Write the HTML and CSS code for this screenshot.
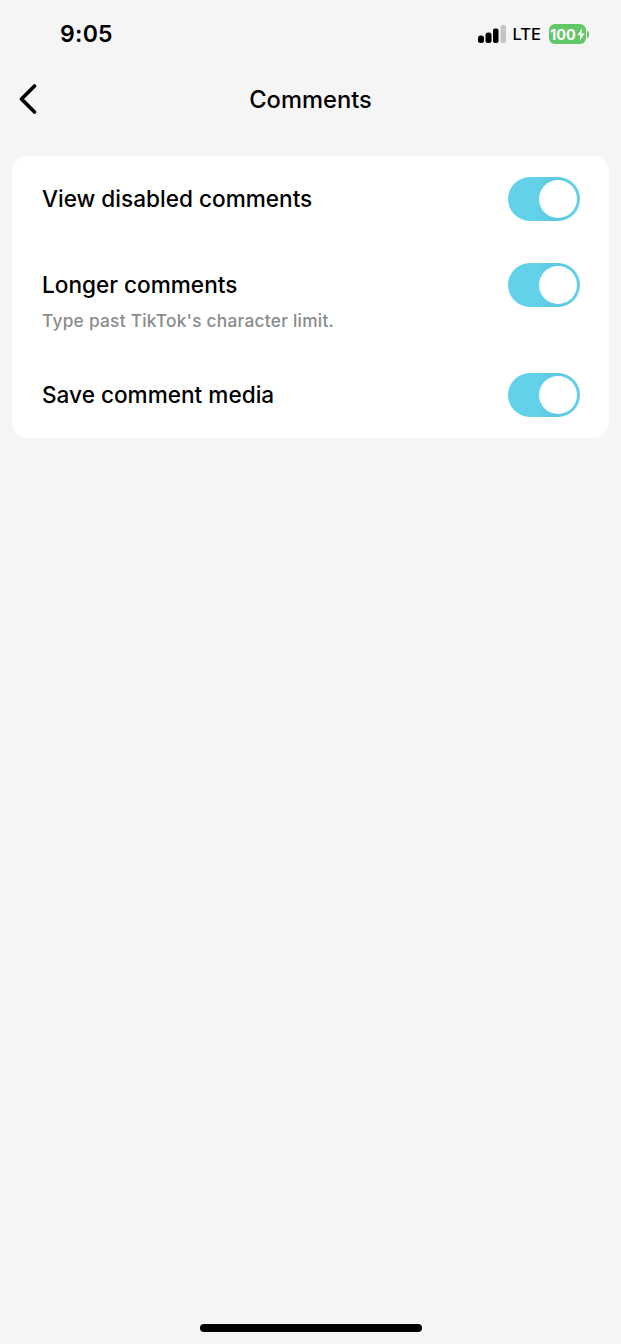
FILE: index.html
```html
<!DOCTYPE html>
<html lang="en">
<head>
    <meta charset="UTF-8">
    <meta name="viewport" content="width=device-width, initial-scale=1.0">
    <title>Comments</title>
    <link rel="stylesheet" href="styles.css">
</head>
<body>
    <div class="screen">
        <div class="status-bar">
            <span class="time">9:05</span>
            <div class="status-icons">
                <svg class="signal" width="28" height="18" viewBox="0 0 28 18">
                    <rect x="0" y="10.5" width="6" height="7.5" rx="2.5" fill="#000"/>
                    <rect x="7.5" y="7.5" width="6" height="10.5" rx="2.5" fill="#000"/>
                    <rect x="15" y="3.5" width="5.5" height="14.5" rx="2" fill="#000"/>
                    <rect x="22.5" y="0" width="5.5" height="18" rx="2" fill="#c4c4c4"/>
                </svg>
                <span class="network">LTE</span>
                <div class="battery">
                    <span class="battery-level">100</span>
                    <svg width="8" height="13" viewBox="0 0 8 13">
                        <path d="M5 0 L0.5 7.2 H3.4 L2.6 13 L7.6 5.4 H4.4 Z" fill="#fff"/>
                    </svg>
                </div>
                <span class="battery-cap"></span>
            </div>
        </div>

        <header class="nav-bar">
            <button class="back-button" aria-label="Back">
                <svg width="20" height="30" viewBox="0 0 20 30">
                    <path d="M16.5 2 L3.5 15 L16.5 28" fill="none" stroke="#000" stroke-width="3.6" stroke-linecap="round" stroke-linejoin="round"/>
                </svg>
            </button>
            <h1>Comments</h1>
        </header>

        <section class="card">
            <div class="row">
                <div class="row-text">
                    <div class="row-title">View disabled comments</div>
                </div>
                <span class="toggle"><span class="knob"></span></span>
            </div>
            <div class="row row-long">
                <div class="row-text">
                    <div class="row-title">Longer comments</div>
                    <div class="row-sub">Type past TikTok's character limit.</div>
                </div>
                <span class="toggle"><span class="knob"></span></span>
            </div>
            <div class="row">
                <div class="row-text">
                    <div class="row-title">Save comment media</div>
                </div>
                <span class="toggle"><span class="knob"></span></span>
            </div>
        </section>

        <div class="home-indicator"></div>
    </div>
</body>
</html>
```

FILE: styles.css
```css
* {
    margin: 0;
    padding: 0;
    box-sizing: border-box;
}

body {
    background: #f5f5f5;
    color: #000;
    font-family: "Inter", "Liberation Sans", sans-serif;
}

.screen {
    height: 1344px;
    display: flex;
    flex-direction: column;
}

.status-bar {
    height: 68px;
    padding: 0 32px 0 60px;
    display: flex;
    justify-content: space-between;
    align-items: center;
}

.time {
    font-size: 23px;
    font-weight: 600;
    letter-spacing: 0.3px;
}

.status-icons {
    display: flex;
    align-items: center;
}

.signal {
    margin-right: 7px;
}

.network {
    font-size: 16.5px;
    font-weight: 500;
    margin-right: 8px;
}

.battery {
    width: 37px;
    height: 20px;
    background: #62c767;
    border-radius: 6px;
    color: #fff;
    display: flex;
    align-items: center;
    justify-content: center;
    gap: 1px;
}

.battery-level {
    font-size: 14.5px;
    font-weight: 700;
}

.battery-cap {
    width: 2px;
    height: 7px;
    margin-left: 1px;
    background: #62c767;
    border-radius: 0 2px 2px 0;
}

.nav-bar {
    height: 62px;
    display: flex;
    align-items: center;
    justify-content: center;
    position: relative;
}

.nav-bar h1 {
    font-size: 23.7px;
    font-weight: 500;
    padding-top: 1px;
}

.back-button {
    position: absolute;
    left: 18px;
    top: 16px;
    background: none;
    border: none;
    display: flex;
}

.card {
    margin: 26px 12px 0;
    background: #fff;
    border-radius: 16px;
    height: 282px;
    padding: 0 29px 0 30px;
}

.row {
    height: 86px;
    display: flex;
    align-items: center;
    justify-content: space-between;
}

.row-long {
    height: 110px;
    align-items: flex-start;
}

.row-long .row-text {
    padding-top: 30px;
}

.row-long .toggle {
    margin-top: 21px;
}

.row-title {
    font-size: 22.6px;
    font-weight: 500;
    line-height: 26px;
}

.row-sub {
    font-size: 17.3px;
    font-weight: 500;
    color: #8a8b8d;
    margin-top: 12px;
    line-height: 21px;
    letter-spacing: 0.26px;
}

.toggle {
    width: 72px;
    height: 44px;
    border-radius: 22px;
    background: linear-gradient(90deg, #63d2e9 40%, #5cc8df 65%, #63d2e9 100%);
    position: relative;
    flex-shrink: 0;
}

.knob {
    position: absolute;
    right: 3px;
    top: 3px;
    width: 38px;
    height: 38px;
    border-radius: 50%;
    background: #fff;
}

.home-indicator {
    width: 222px;
    height: 8px;
    border-radius: 4px;
    background: #000;
    margin: auto auto 12px;
}
```
